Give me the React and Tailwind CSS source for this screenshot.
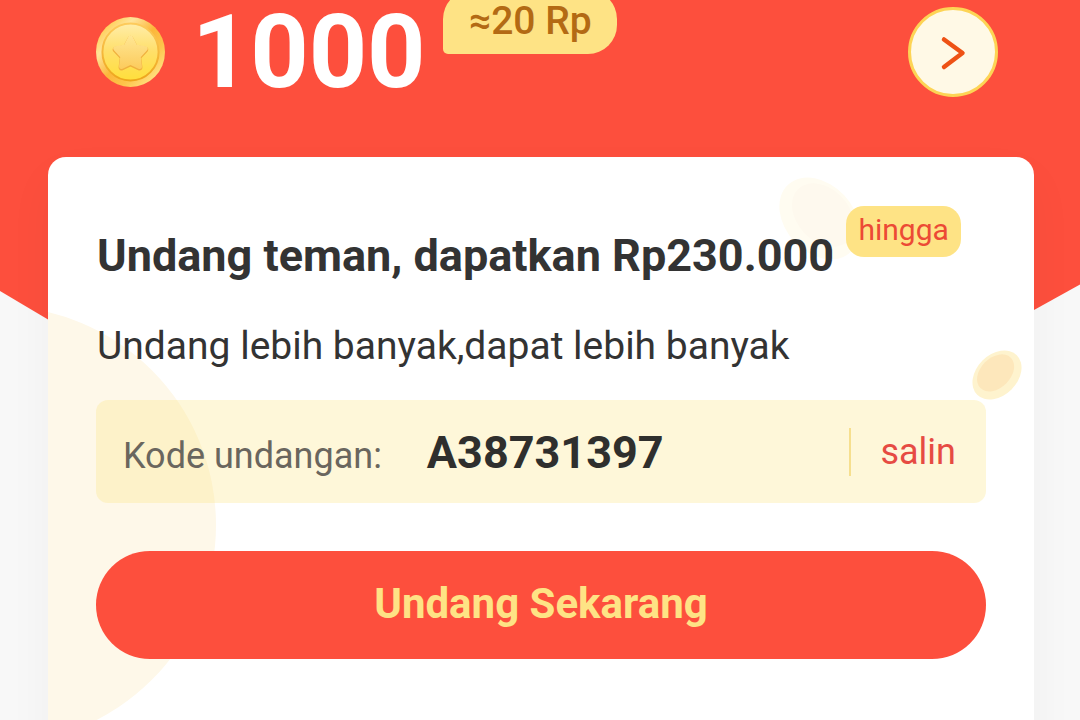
const STAR_PATH = 'M35 21l4.800 9 10.200 1.600-7.200 7.600 1.300 10.300-9.100-4.300-9.100 4.300 1.300-10.300-7.200-7.600 10.200-1.600z';

const CoinIcon = () => (
  <svg className="h-[70px] w-[69px] shrink-0" viewBox="0 0 70 70" preserveAspectRatio="none" fill="none" aria-hidden="true">
    <defs>
      <linearGradient id="coinRim" x1="10" y1="10" x2="60" y2="60" gradientUnits="userSpaceOnUse">
        <stop stopColor="#ffd05c" />
        <stop offset="0.2" stopColor="#ffe49a" />
        <stop offset="0.5" stopColor="#fcb63a" />
        <stop offset="0.75" stopColor="#fdc44a" />
        <stop offset="1" stopColor="#ffdf7c" />
      </linearGradient>
      <linearGradient id="coinFace" x1="35" y1="6" x2="35" y2="64" gradientUnits="userSpaceOnUse">
        <stop stopColor="#ffedaa" />
        <stop offset="0.5" stopColor="#ffdf68" />
        <stop offset="1" stopColor="#ffdf3a" />
      </linearGradient>
      <linearGradient id="coinEdge" x1="35" y1="6" x2="35" y2="65" gradientUnits="userSpaceOnUse">
        <stop stopColor="#fdcb5c" />
        <stop offset="1" stopColor="#eda41a" />
      </linearGradient>
      <linearGradient id="coinStar" x1="35" y1="18" x2="35" y2="52" gradientUnits="userSpaceOnUse">
        <stop stopColor="#ffe795" />
        <stop offset="1" stopColor="#fccb5c" />
      </linearGradient>
    </defs>
    <circle cx="35" cy="35" r="35" fill="url(#coinRim)" />
    <circle cx="35" cy="35" r="28.5" fill="url(#coinFace)" stroke="url(#coinEdge)" strokeWidth="2" />
    <path d={STAR_PATH} transform="translate(0 1)" fill="#f0b03e" stroke="#f0b03e" strokeWidth="6" strokeLinejoin="round" />
    <path d={STAR_PATH} fill="#fccb5c" stroke="url(#coinStar)" strokeWidth="5" strokeLinejoin="round" />
    <path d={STAR_PATH} fill="url(#coinStar)" />
  </svg>
);

const HeaderBackground = () => (
  <svg className="absolute inset-0 h-full w-full" viewBox="0 0 1080 720" fill="none" aria-hidden="true">
    <path d="M0 0H1080V284.500L1034 310Q540 560 48 319.500L0 291Z" fill="#fd4f3d" />
  </svg>
);

// Pale circle and the two faded coins behind the card content
const CardDecoration = () => (
  <svg className="absolute left-0 top-0" width="986" height="563" viewBox="0 0 986 563" fill="none" aria-hidden="true">
    <circle cx="-51" cy="368" r="219" fill="#fef8e9" />
    <g transform="rotate(47 770 60)">
      <ellipse cx="772" cy="60" rx="46" ry="34" fill="#fffcf1" />
      <ellipse cx="772" cy="55" rx="36" ry="26" fill="#fef9ee" />
    </g>
    <g transform="rotate(-45 949 218)">
      <ellipse cx="949" cy="218" rx="28" ry="20.5" fill="#fef3ce" />
      <ellipse cx="949.5" cy="215.5" rx="21.5" ry="15" fill="#fde7bb" />
    </g>
  </svg>
);

const BalanceHeader = () => (
  <header className="relative flex h-[157px] items-start pl-24 pr-[82px]">
    <div className="pt-[17px]">
      <CoinIcon />
    </div>
    <span className="ml-[27px] mt-px text-[102px] font-bold leading-[102px] tracking-[-0.2px] text-white">1000</span>
    <span className="-mt-2.5 ml-[18px] flex h-16 w-[174px] items-center justify-center rounded-[29px] rounded-bl-[5px] bg-[#fee385] pb-px text-[39px] font-medium leading-none text-[#b36a14]">
      ≈20 Rp
    </span>
    <button
      type="button"
      aria-label="Detail"
      className="ml-auto mt-[7px] flex h-[90px] w-[90px] items-center justify-center rounded-full border-[3px] border-[#fdd455] bg-[#fff9e6]"
    >
      <svg className="h-10 w-10" viewBox="0 0 40 40" fill="none" aria-hidden="true">
        <path d="M11 7.500l18.500 13.500L11 35" stroke="#ee5215" strokeWidth="4.500" strokeLinecap="round" strokeLinejoin="round" />
      </svg>
    </button>
  </header>
);

const InviteCard = () => (
  <section className="relative ml-12 h-[580px] w-[986px] overflow-hidden rounded-t-[18px] bg-white px-12">
    <CardDecoration />
    <div className="relative">
      <div className="flex items-start pt-12">
        <h1 className="mt-[25px] whitespace-nowrap pl-px text-[45px] font-bold leading-[52px] text-[#333]">
          Undang teman, dapatkan Rp230.000
        </h1>
        <span className="ml-3 mt-px flex h-[51px] w-[115px] items-center justify-center rounded-[18px] bg-[#fee385] pb-[3px] text-[30px] leading-none text-[#ec4a35]">
          hingga
        </span>
      </div>
      <p className="mt-10 pl-px text-[39px] leading-[48px] text-[#333]">Undang lebih banyak,dapat lebih banyak</p>

      <div className="mt-[30px] flex h-[103px] items-center rounded-[12px] bg-[#fde382]/30 pl-[27px] pr-[30px]">
        <span className="pt-2 text-[36px] text-[#6a665e]">Kode undangan:</span>
        <strong className="ml-[45px] pt-0.5 text-[45px] font-bold text-[#2f2f2d]">A38731397</strong>
        <button type="button" className="ml-auto flex h-12 items-center border-l-2 border-[#f6df8e] pl-[29px] text-[36px] text-[#e64b43]">
          salin
        </button>
      </div>

      <button
        type="button"
        className="mt-12 flex h-[108px] w-full items-center justify-center rounded-full bg-[#fd4f3d] pb-1 text-[42px] font-bold text-[#fee385]"
      >
        Undang Sekarang
      </button>
    </div>
  </section>
);

export default function App() {
  return (
    <main className="relative h-[720px] w-[1080px] overflow-hidden bg-[#f8f8f8] font-[Roboto,sans-serif]">
      <HeaderBackground />
      <BalanceHeader />
      <div className="relative h-[563px]">
        <div className="absolute left-12 top-0 h-[620px] w-[986px] rounded-[18px] shadow-[0_20px_48px_rgba(0,0,0,0.04)]" />
        <InviteCard />
      </div>
    </main>
  );
}
